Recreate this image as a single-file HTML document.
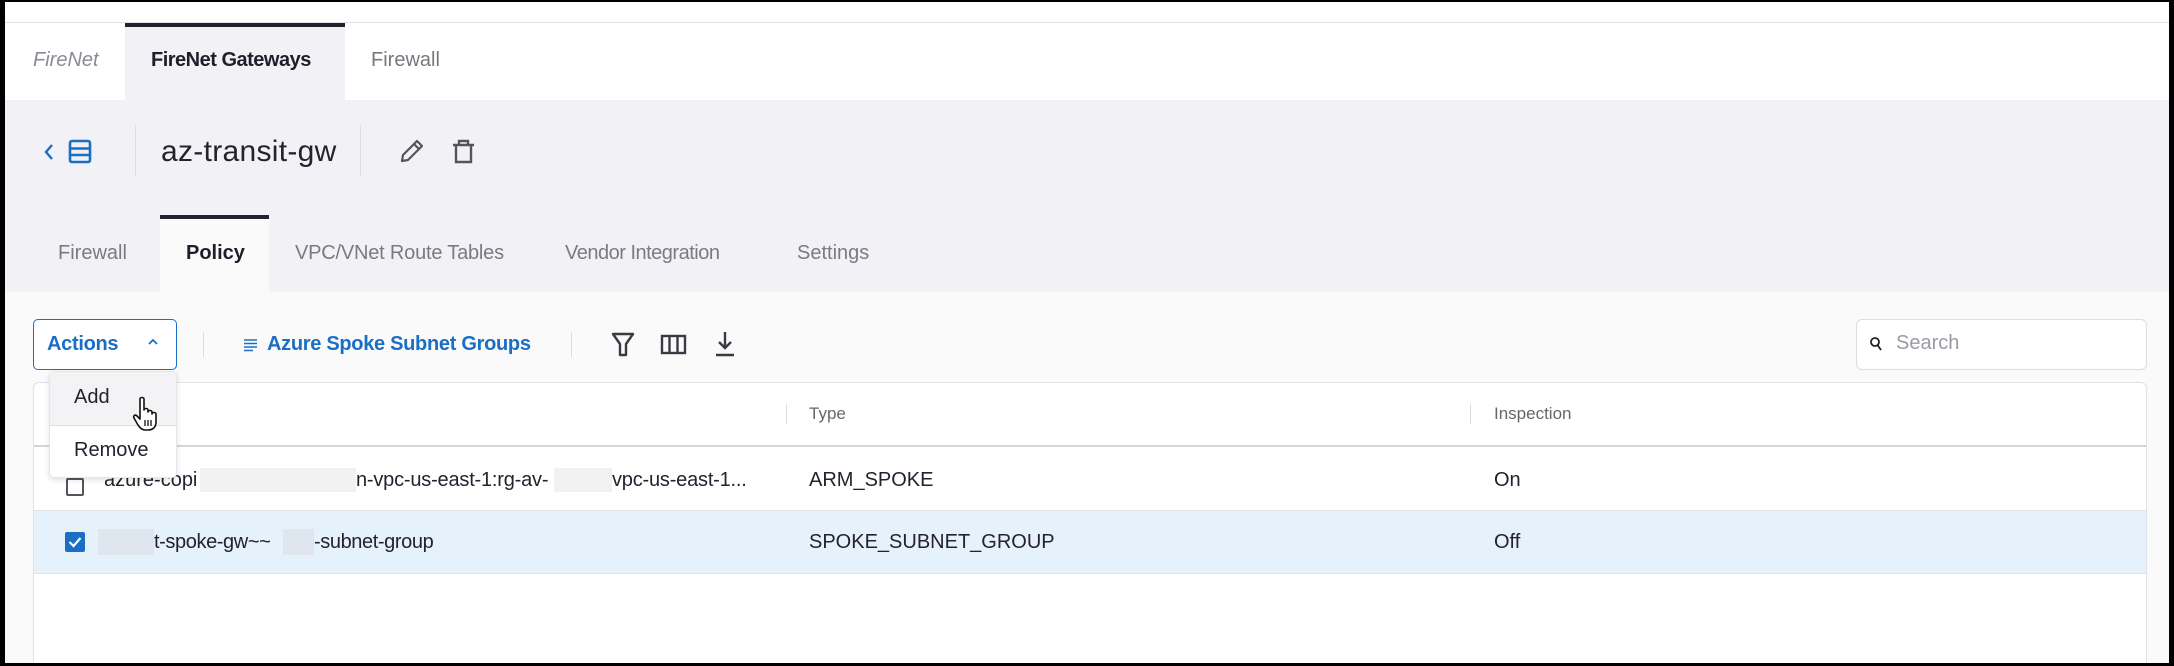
<!DOCTYPE html>
<html><head><meta charset="utf-8"><style>
*{box-sizing:border-box;margin:0;padding:0}
body{width:2174px;height:666px;overflow:hidden;background:#000;font-family:"Liberation Sans",sans-serif;position:relative}
.a{position:absolute}
.t{position:absolute;white-space:nowrap;line-height:1}
</style></head><body>
<div class="a" style="left:5px;top:2px;width:2164px;height:661px;background:#fafafa;overflow:hidden">
</div>
<div class="a" style="left:5px;top:2px;width:2164px;height:98px;background:#fff"></div>
<div class="a" style="left:5px;top:22px;width:2164px;height:1px;background:#e2e2e6"></div>
<div class="a" style="left:125px;top:23px;width:220px;height:77px;background:#f2f2f6;border-top:4px solid #24222e"></div>
<div class="t" style="left:33px;top:50px;font-size:20px;color:#8a8a94;font-style:italic">FireNet</div>
<div class="t" style="left:151px;top:50px;font-size:20px;color:#1f1f2b;font-weight:bold;letter-spacing:-0.5px">FireNet Gateways</div>
<div class="t" style="left:371px;top:50px;font-size:20px;color:#77777f">Firewall</div>
<div class="a" style="left:5px;top:100px;width:2164px;height:192px;background:#f2f2f6"></div>
<svg class="a" style="left:40px;top:138px" width="60" height="28" viewBox="0 0 60 28">
<path d="M12 7 L6 14 L12 21" fill="none" stroke="#1a6fc4" stroke-width="2.4"/>
<rect x="30" y="3" width="20" height="21" rx="2" fill="none" stroke="#1a6fc4" stroke-width="2.6"/>
<path d="M30 10.5 H50 M30 17 H50" stroke="#1a6fc4" stroke-width="2.4"/>
</svg>
<div class="a" style="left:135px;top:125px;width:1px;height:51px;background:#dcdce2"></div>
<div class="t" style="left:161px;top:137px;font-size:30px;color:#24222e;letter-spacing:0.3px">az-transit-gw</div>
<div class="a" style="left:360px;top:125px;width:1px;height:51px;background:#dcdce2"></div>
<svg class="a" style="left:398px;top:137px" width="80" height="28" viewBox="0 0 80 28">
<path d="M4 24 L5 18 L19 4 L24 9 L10 23 Z M16 7 L21 12" fill="none" stroke="#55545e" stroke-width="2.2" stroke-linejoin="round"/>
<path d="M55 8 H76 M61 8 V4 H70 V8 M58 8 V25 H73 V8" fill="none" stroke="#55545e" stroke-width="2.4"/>
</svg>
<div class="a" style="left:160px;top:215px;width:109px;height:77px;background:#fafafa;border-top:4px solid #24222e"></div>
<div class="t" style="left:58px;top:243px;font-size:20px;color:#7a7a84">Firewall</div>
<div class="t" style="left:186px;top:243px;font-size:20px;color:#1f1f2b;font-weight:bold">Policy</div>
<div class="t" style="left:295px;top:243px;font-size:20px;color:#7a7a84;letter-spacing:-0.2px">VPC/VNet Route Tables</div>
<div class="t" style="left:565px;top:243px;font-size:20px;color:#7a7a84;letter-spacing:-0.5px">Vendor Integration</div>
<div class="t" style="left:797px;top:243px;font-size:20px;color:#7a7a84">Settings</div>
<div class="a" style="left:33px;top:319px;width:144px;height:51px;border:1.5px solid #1a6fc4;border-radius:5px;background:#fff"></div>
<div class="t" style="left:47px;top:334px;font-size:20px;color:#1a6fc4;font-weight:bold;letter-spacing:-0.3px">Actions</div>
<svg class="a" style="left:147px;top:337px" width="12" height="10"><path d="M2 7 L6 3 L10 7" fill="none" stroke="#1a6fc4" stroke-width="1.8"/></svg>
<div class="a" style="left:203px;top:332px;width:1px;height:25px;background:#dcdce2"></div>
<svg class="a" style="left:244px;top:338px" width="14" height="14"><path d="M0 2H13M0 5.5H13M0 9H13M0 12.5H9" stroke="#1a6fc4" stroke-width="1.6"/></svg>
<div class="t" style="left:267px;top:334px;font-size:20px;color:#1a6fc4;font-weight:bold;letter-spacing:-0.3px">Azure Spoke Subnet Groups</div>
<div class="a" style="left:571px;top:332px;width:1px;height:25px;background:#dcdce2"></div>
<svg class="a" style="left:608px;top:330px" width="132" height="28" viewBox="0 0 132 28">
<path d="M5 4 H25 L18 14 V25 H12 V14 Z" fill="none" stroke="#3a3a44" stroke-width="2.4" stroke-linejoin="round"/>
<rect x="54" y="6" width="23" height="17" fill="none" stroke="#3a3a44" stroke-width="2.4"/>
<path d="M61.5 6 V23 M69.5 6 V23" stroke="#3a3a44" stroke-width="2.4"/>
<path d="M117 2 V18 M111 12 L117 18 L123 12 M108 25 H126" fill="none" stroke="#3a3a44" stroke-width="2.4"/>
</svg>
<div class="a" style="left:1856px;top:319px;width:291px;height:51px;border:1px solid #dcdce2;border-radius:6px;background:#fff"></div>
<svg class="a" style="left:1869px;top:336px" width="14" height="16"><circle cx="6" cy="6" r="4" fill="none" stroke="#222" stroke-width="1.8"/><path d="M8.5 9 L12 14" stroke="#222" stroke-width="1.8"/></svg>
<div class="t" style="left:1896px;top:333px;font-size:20px;color:#9a9aa2">Search</div>
<div class="a" style="left:33px;top:382px;width:2114px;height:281px;border:1px solid #e2e2e6;border-bottom:none;border-radius:6px 6px 0 0;background:#fff"></div>
<div class="a" style="left:786px;top:404px;width:1px;height:20px;background:#dcdce2"></div>
<div class="t" style="left:809px;top:405px;font-size:17px;color:#66666f">Type</div>
<div class="a" style="left:1470px;top:404px;width:1px;height:20px;background:#dcdce2"></div>
<div class="t" style="left:1494px;top:405px;font-size:17px;color:#66666f">Inspection</div>
<div class="a" style="left:34px;top:445px;width:2112px;height:2px;background:#d4d4de"></div>
<div class="a" style="left:66px;top:478px;width:18px;height:18px;border:2px solid #55545e;border-radius:2px"></div>
<div class="t" style="left:104px;top:470px;font-size:20px;color:#24222e">azure-copi</div>
<div class="a" style="left:200px;top:468px;width:156px;height:24px;background:#f2f2f4"></div>
<div class="t" style="left:356px;top:470px;font-size:20px;color:#24222e;letter-spacing:-0.2px">n-vpc-us-east-1:rg-av-</div>
<div class="a" style="left:554px;top:468px;width:58px;height:24px;background:#f2f2f4"></div>
<div class="t" style="left:612px;top:470px;font-size:20px;color:#24222e;letter-spacing:-0.2px">vpc-us-east-1...</div>
<div class="t" style="left:809px;top:470px;font-size:20px;color:#24222e">ARM_SPOKE</div>
<div class="t" style="left:1494px;top:470px;font-size:20px;color:#24222e">On</div>
<div class="a" style="left:34px;top:510px;width:2112px;height:64px;background:#e5f2fc;border-top:1px solid #dfe3ea;border-bottom:1px solid #dfe3ea"></div>
<div class="a" style="left:65px;top:532px;width:20px;height:20px;background:#1a6fc4;border-radius:2px"></div>
<svg class="a" style="left:65px;top:532px" width="20" height="20"><path d="M4.5 10 L8.5 14 L15.5 6" fill="none" stroke="#fff" stroke-width="2.2"/></svg>
<div class="a" style="left:98px;top:529px;width:56px;height:26px;background:#dfe6ee"></div>
<div class="t" style="left:154px;top:532px;font-size:20px;color:#24222e;letter-spacing:-0.4px">t-spoke-gw~~</div>
<div class="a" style="left:283px;top:529px;width:31px;height:26px;background:#dfe6ee"></div>
<div class="t" style="left:314px;top:532px;font-size:20px;color:#24222e;letter-spacing:-0.4px">-subnet-group</div>
<div class="t" style="left:809px;top:532px;font-size:20px;color:#24222e">SPOKE_SUBNET_GROUP</div>
<div class="t" style="left:1494px;top:532px;font-size:20px;color:#24222e">Off</div>
<div class="a" style="left:49px;top:371px;width:128px;height:107px;background:#fff;border:1px solid #e6e6ea;border-radius:5px;box-shadow:0 2px 6px rgba(0,0,0,.12);overflow:hidden">
<div style="height:54px;background:#f3f3f5;border-bottom:1px solid #dcdce2"></div>
</div>
<div class="t" style="left:74px;top:387px;font-size:20px;color:#24222e">Add</div>
<div class="t" style="left:74px;top:440px;font-size:20px;color:#24222e">Remove</div>
<svg class="a" style="left:132px;top:396px" width="34" height="36" viewBox="0 0 34 36">
<path d="M8 3 C8 1 12 1 12 3 V14 C12 12 16 12 16 14 V16 C16 14 20 14 20 16 V18 C20 16 24 16 24 18 V26 C24 31 21 34 16 34 H13 C10 34 8 32 6 29 L2 22 C1 20 3 18 5 20 L8 23 Z" fill="#fff" stroke="#111" stroke-width="1.6" stroke-linejoin="round"/>
<path d="M13 24 V30 M16 24 V30 M19 24 V30" stroke="#111" stroke-width="1.3"/>
</svg>
</body></html>
